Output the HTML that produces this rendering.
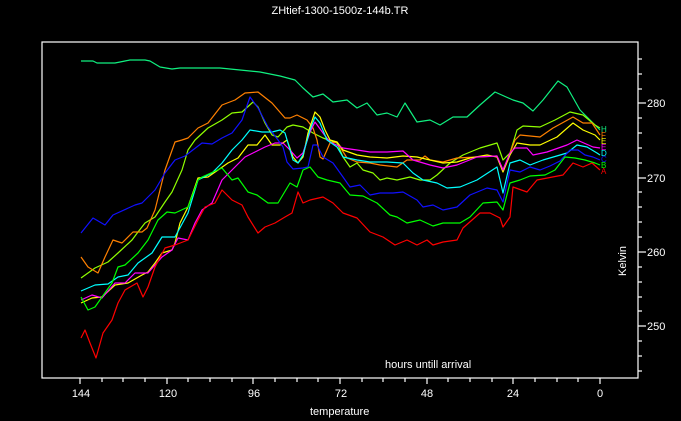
<!DOCTYPE html>
<html><head><meta charset="utf-8"><style>
html,body{margin:0;padding:0;background:#000;width:681px;height:421px;overflow:hidden}
svg{display:block}
text{font-family:"Liberation Sans",sans-serif;fill:#fff;font-size:11px}
polyline{fill:none;stroke-width:1.2;stroke-linejoin:round}
</style></head><body>
<svg width="681" height="421" viewBox="0 0 681 421" xmlns="http://www.w3.org/2000/svg">
<rect width="681" height="421" fill="#000"/>
<text x="340" y="14" text-anchor="middle">ZHtief-1300-1500z-144b.TR</text>
<rect x="42" y="42" width="596" height="336" fill="none" stroke="#fff" stroke-width="1.2"/>
<g stroke="#fff" stroke-width="1.2">
<line x1="80" y1="378" x2="80" y2="384"/><line x1="102" y1="378" x2="102" y2="382"/><line x1="123" y1="378" x2="123" y2="382"/><line x1="145" y1="378" x2="145" y2="382"/>
<line x1="167" y1="378" x2="167" y2="384"/><line x1="188" y1="378" x2="188" y2="382"/><line x1="210" y1="378" x2="210" y2="382"/><line x1="232" y1="378" x2="232" y2="382"/>
<line x1="253" y1="378" x2="253" y2="384"/><line x1="275" y1="378" x2="275" y2="382"/><line x1="297" y1="378" x2="297" y2="382"/><line x1="318" y1="378" x2="318" y2="382"/>
<line x1="340" y1="378" x2="340" y2="384"/><line x1="362" y1="378" x2="362" y2="382"/><line x1="383" y1="378" x2="383" y2="382"/><line x1="405" y1="378" x2="405" y2="382"/>
<line x1="427" y1="378" x2="427" y2="384"/><line x1="448" y1="378" x2="448" y2="382"/><line x1="470" y1="378" x2="470" y2="382"/><line x1="492" y1="378" x2="492" y2="382"/>
<line x1="513" y1="378" x2="513" y2="384"/><line x1="535" y1="378" x2="535" y2="382"/><line x1="557" y1="378" x2="557" y2="382"/><line x1="578" y1="378" x2="578" y2="382"/>
<line x1="600" y1="378" x2="600" y2="384"/>
<line x1="638" y1="59" x2="642" y2="59"/><line x1="638" y1="74" x2="642" y2="74"/><line x1="638" y1="89" x2="642" y2="89"/><line x1="638" y1="103" x2="646" y2="103"/>
<line x1="638" y1="118" x2="642" y2="118"/><line x1="638" y1="133" x2="642" y2="133"/><line x1="638" y1="148" x2="642" y2="148"/><line x1="638" y1="163" x2="642" y2="163"/><line x1="638" y1="178" x2="646" y2="178"/>
<line x1="638" y1="192" x2="642" y2="192"/><line x1="638" y1="207" x2="642" y2="207"/><line x1="638" y1="222" x2="642" y2="222"/><line x1="638" y1="237" x2="642" y2="237"/><line x1="638" y1="252" x2="646" y2="252"/>
<line x1="638" y1="267" x2="642" y2="267"/><line x1="638" y1="282" x2="642" y2="282"/><line x1="638" y1="297" x2="642" y2="297"/><line x1="638" y1="311" x2="642" y2="311"/><line x1="638" y1="326" x2="646" y2="326"/>
<line x1="638" y1="341" x2="642" y2="341"/><line x1="638" y1="356" x2="642" y2="356"/><line x1="638" y1="371" x2="642" y2="371"/>
</g>
<g text-anchor="middle">
<text x="81" y="397">144</text><text x="168" y="397">120</text><text x="254" y="397">96</text><text x="341" y="397">72</text><text x="427" y="397">48</text><text x="513" y="397">24</text><text x="600" y="397">0</text>
</g>
<text x="647" y="107">280</text><text x="647" y="182">270</text><text x="647" y="256">260</text><text x="647" y="330">250</text>
<text x="385" y="368">hours untill arrival</text>
<text x="310" y="415">temperature</text>
<text transform="translate(626,261) rotate(-90)" text-anchor="middle">Kelvin</text>

<polyline stroke="#10f080" points="81,61 93,61 97,63 115,63 125,61 130,60 145,60 150,61 155,64 160,67 172,69 180,68 205,68 220,68 230,69 260,72 280,76 295,80 303,88 313,97 323,94 333,102 347,100 357,108 367,103 377,115 387,113 397,117 405,103 417,122 430,120 440,125 453,117 467,117 480,105 495,92 513,100 523,103 533,111 543,100 558,81 567,87 580,110 593,123 600,130"/>
<polyline stroke="#90ff00" points="81,278 95,268 108,262 118,253 132,240 138,232 145,223 155,217 165,202 172,192 182,170 188,150 195,140 208,128 222,120 232,113 242,112 253,102 258,107 265,123 272,135 278,137 287,127 293,125 303,127 313,133 323,138 337,143 343,157 350,167 357,163 363,170 373,173 380,180 387,178 397,180 410,177 420,180 430,180 437,175 450,163 463,155 480,148 497,143 503,160 510,153 517,130 523,126 540,127 555,120 570,112 583,115 595,125 600,128"/>
<polyline stroke="#ff8000" points="81,257 88,267 98,273 105,257 113,240 122,243 133,232 142,232 147,228 155,210 165,170 175,142 182,140 188,138 198,128 208,123 222,105 235,100 245,93 258,92 272,103 285,118 290,118 297,115 307,120 313,128 317,140 320,157 323,159 330,143 337,142 347,158 357,162 370,163 380,165 397,167 407,160 420,160 425,156 430,160 443,162 457,158 477,157 497,156 503,170 510,153 515,140 520,135 540,137 553,128 573,117 583,123 592,123 600,135"/>
<polyline stroke="#ffff00" points="81,303 92,298 102,297 115,285 128,283 142,275 148,272 155,263 162,253 172,250 175,243 180,223 188,207 198,178 208,177 218,170 228,163 238,158 248,145 257,145 265,135 272,145 280,145 287,140 293,157 298,163 303,157 308,133 315,112 320,117 325,130 330,140 337,142 343,150 357,155 370,157 387,158 403,156 417,157 430,160 443,163 457,162 470,158 487,155 497,157 503,172 510,155 517,143 530,145 540,145 557,137 573,123 583,130 595,135 600,140"/>
<polyline stroke="#ff00ff" points="81,300 92,295 102,298 115,283 125,283 135,273 148,273 155,265 162,257 172,250 178,238 188,240 195,223 202,210 212,203 222,180 232,170 245,157 255,152 265,147 275,143 283,143 290,150 297,158 303,153 310,132 315,122 323,133 330,142 343,148 357,150 370,152 387,152 403,151 413,160 430,165 443,168 457,165 477,157 497,156 503,170 510,153 515,148 527,148 533,155 547,152 567,145 577,140 593,147 600,148"/>
<polyline stroke="#00ffff" points="81,291 95,285 108,284 118,277 128,275 138,263 152,253 162,237 175,237 188,213 198,180 212,173 222,163 232,150 242,140 250,130 262,132 272,132 280,130 285,133 293,160 298,163 303,155 310,130 315,117 320,123 327,140 337,147 343,157 357,160 370,162 387,162 403,163 413,173 423,180 437,183 447,188 460,187 477,180 497,167 503,193 510,163 520,160 530,165 543,160 567,153 577,145 587,147 597,153 600,155"/>
<polyline stroke="#1010ff" points="81,233 93,218 105,225 113,215 135,205 142,203 155,190 165,173 175,160 185,156 202,143 212,144 222,138 232,133 242,120 250,97 258,108 268,127 278,140 283,147 287,162 293,169 303,168 308,167 313,145 317,145 323,157 333,163 343,177 350,187 360,185 370,195 380,193 393,193 403,192 417,200 423,207 433,205 443,210 457,207 470,195 487,188 497,190 503,202 510,170 520,172 530,167 540,170 550,166 560,161 570,150 578,150 585,155 593,157 600,160"/>
<polyline stroke="#00ff00" points="81,297 88,310 95,307 102,297 112,283 118,267 125,265 138,253 148,240 158,220 167,212 175,213 188,207 198,180 202,177 222,168 232,180 238,178 248,192 257,195 268,203 278,203 290,183 297,187 303,170 310,167 318,177 327,180 340,183 350,195 363,196 377,203 390,215 397,217 407,223 420,220 433,226 443,223 460,223 470,217 483,203 497,202 503,210 510,183 520,180 530,176 545,175 555,170 565,157 575,158 585,160 595,163 600,165"/>
<polyline stroke="#ff0000" points="81,338 85,330 90,343 96,358 103,333 112,320 118,303 125,290 137,283 143,297 148,287 155,267 165,248 175,245 188,240 198,220 205,207 215,203 222,190 232,200 242,205 248,217 258,233 265,227 275,223 285,217 292,213 298,192 303,203 310,200 323,197 333,203 343,213 357,218 370,232 383,237 395,245 407,240 417,245 427,240 433,245 443,242 457,240 463,228 480,213 490,213 500,218 503,227 510,217 513,187 527,192 537,180 563,175 573,163 583,167 592,163 600,170"/>
<g font-size="7" style="font-size:7px">
<text x="601" y="132" style="fill:#10f080;font-size:8px">H</text>
<text x="601" y="138" style="fill:#ff8000;font-size:8px">F</text>
<text x="601" y="144" style="fill:#ffff00;font-size:8px">E</text>
<text x="601" y="150" style="fill:#ff00ff;font-size:8px">E</text>
<text x="601" y="156" style="fill:#00ffff;font-size:8px">D</text>
<text x="601" y="162" style="fill:#1010ff;font-size:8px">C</text>
<text x="601" y="168" style="fill:#00ff00;font-size:8px">B</text>
<text x="601" y="174" style="fill:#ff0000;font-size:8px">A</text>
</g>
</svg>
</body></html>
